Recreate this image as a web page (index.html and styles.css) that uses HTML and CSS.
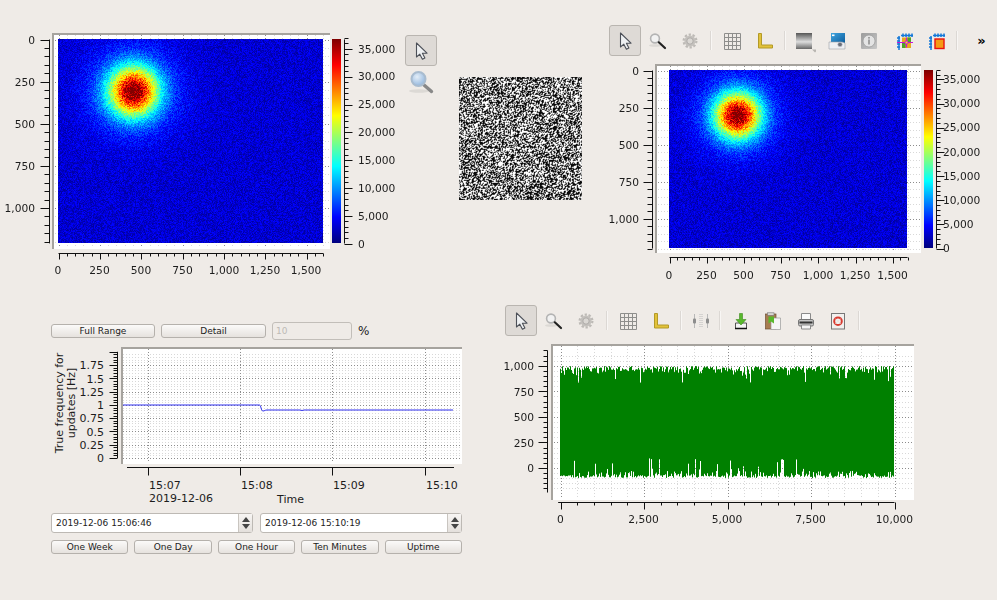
FILE: index.html
```html
<!DOCTYPE html>
<html lang="en">
<head>
<meta charset="utf-8">
<title>Plots</title>
<link rel="stylesheet" href="styles.css">
</head>
<body>
<svg class="defs" aria-hidden="true">
  <defs>
    <linearGradient id="g-metal" x1="0" y1="0" x2="0" y2="1"><stop offset="0" stop-color="#555"/><stop offset=".55" stop-color="#ddd"/><stop offset="1" stop-color="#666"/></linearGradient>
    <linearGradient id="g-info" x1="0" y1="0" x2="1" y2="1"><stop offset="0" stop-color="#9c9c9c"/><stop offset="1" stop-color="#c8c8c8"/></linearGradient>
    <linearGradient id="g-blue" x1="0" y1="0" x2="1" y2="1"><stop offset="0" stop-color="#3fa5e0"/><stop offset="1" stop-color="#0b5a9a"/></linearGradient>
    <radialGradient id="g-lens" cx=".4" cy=".35" r=".7"><stop offset="0" stop-color="#e4eef8"/><stop offset="1" stop-color="#8fb4dc"/></radialGradient>
    <symbol id="i-arrow" viewBox="0 0 24 24"><path d="M7.5 4V18L10.8 15.2 13.4 20.3 15.9 19 13.4 14.2H18Z" fill="#eef0f2" stroke="#4c5058" stroke-width="1.1" stroke-linejoin="round"/></symbol>
    <symbol id="i-zoom" viewBox="0 0 24 24"><ellipse cx="9" cy="16.5" rx="6" ry="1.3" fill="#dcd9d5"/><circle cx="9" cy="9.5" r="4.4" fill="#f2f2f2" stroke="#b4b4b4" stroke-width="1.6"/><path d="M12.800 13.300 19 19" stroke="#222" stroke-width="2.2" stroke-linecap="round"/></symbol>
    <symbol id="i-gear" viewBox="0 0 24 24"><circle cx="12" cy="12" r="5.6" fill="#c4c1bd"/><circle cx="12" cy="12" r="6.4" fill="none" stroke="#bdbab6" stroke-width="2.2" stroke-dasharray="2.3 1.7"/><circle cx="12" cy="12" r="3.2" fill="#dad7d3" stroke="#aeaba8"/></symbol>
    <symbol id="i-grid" viewBox="0 0 24 24"><path d="M4.5 4.5H20.5V20.5H4.5ZM8.5 4.5V20.5M12.5 4.5V20.5M16.5 4.5V20.5M4.5 8.5H20.5M4.5 12.5H20.5M4.5 16.5H20.5" fill="none" stroke="#8e8e8c"/></symbol>
    <symbol id="i-ruler" viewBox="0 0 24 24"><path d="M6.5 4.500H9.500V16H20.500V19H6.500Z" fill="#e2c23a" stroke="#b39a28"/></symbol>
    <symbol id="i-scale" viewBox="0 0 24 24"><rect x="4" y="4" width="16" height="16" fill="url(#g-metal)"/><path d="M20 20.5H26L23 23.5Z" fill="#b8b5b1"/></symbol>
    <symbol id="i-camera" viewBox="0 0 24 24"><rect x="6" y="4" width="14" height="11" fill="url(#g-blue)"/><path d="M4 13H17L20 14V20H4Z" fill="#eef0f2" stroke="#9aa0a6" stroke-width=".6"/><circle cx="15" cy="15.5" r="2.300" fill="#6a7078" stroke="#ccd" stroke-width=".6"/><rect x="7" y="5.500" width="2.500" height="1.600" fill="#fff"/></symbol>
    <symbol id="i-info" viewBox="0 0 24 24"><rect x="4" y="4" width="16" height="16" rx="1" fill="url(#g-info)"/><circle cx="12" cy="12" r="6" fill="#e4e4e4" stroke="#8f8f8f" stroke-width=".6"/><rect x="11" y="10.5" width="2" height="5" fill="#a0a0a0"/><rect x="11" y="8" width="2" height="1.6" fill="#a0a0a0"/></symbol>
    <symbol id="i-pick" viewBox="0 0 24 24"><path d="M9 8.500H18V19H9Z" fill="#e8a81c"/><path d="M9 14H12.500V19H9ZM14.500 8.500H18V13H14.500Z" fill="#4ca02c"/><path d="M6 7V21M4 9H7M4 12H7M4 15H7M4 18H7M8 6.500H20M10 4.500V8M13 4.500V8M16 4.500V8M19 4.500V8" stroke="#1478d8" stroke-width="1.500" fill="none"/><path d="M4 13.500H20M13.500 8.500V18.500" stroke="#c814d8" stroke-width="1.200"/><circle cx="13.500" cy="13.500" r="1.500" fill="#f0e020" stroke="#c814d8"/></symbol>
    <symbol id="i-rect" viewBox="0 0 24 24"><rect x="10" y="10" width="9" height="9.500" fill="#f59a14" stroke="#e81010" stroke-width="1.400"/><path d="M6 7V21M4 9H7M4 12H7M4 15H7M4 18H7M8 6.500H20M10 4.500V8M13 4.500V8M16 4.500V8M19 4.500V8" stroke="#1478d8" stroke-width="1.500" fill="none"/></symbol>
    <symbol id="i-cursors" viewBox="0 0 24 24"><path d="M5.500 5V19M18.500 5V19" stroke="#b8b8b8"/><rect x="4" y="9.500" width="3" height="5" rx="1" fill="#8d8d8d"/><rect x="17" y="9.500" width="3" height="5" rx="1" fill="#8d8d8d"/><path d="M11 5V19M13 5V19" stroke="#bbb" stroke-dasharray="1 1"/></symbol>
    <symbol id="i-save" viewBox="0 0 24 24"><path d="M6.500 14V19.500H17.500V14Z" fill="#f4f4f4" stroke="#555"/><path d="M6 19.500H18" stroke="#111" stroke-width="1.500"/><path d="M10.500 4.500H13.500V10.500H17L12 16 7 10.500H10.500Z" fill="#58b82c" stroke="#3c8c1c" stroke-width=".6"/></symbol>
    <symbol id="i-paste" viewBox="0 0 24 24"><rect x="4.500" y="5" width="10.500" height="15" fill="#a87c50" stroke="#6e5034" stroke-width=".7"/><rect x="6.500" y="3.800" width="6.500" height="2.500" fill="#d8d6d2" stroke="#777" stroke-width=".6"/><path d="M10 9H19.500V20.500H10Z" fill="#f5f5f5" stroke="#999" stroke-width=".7"/><path d="M7.500 7.500H13V14.500L10 12.500 7.500 14.500Z" fill="#58b82c"/></symbol>
    <symbol id="i-print" viewBox="0 0 24 24"><path d="M7.500 4.500H16.500V11H7.500Z" fill="#fafafa" stroke="#8a8a8a"/><rect x="4.500" y="10.500" width="15" height="6.500" rx="1.500" fill="#c4c4c4" stroke="#777"/><rect x="5.500" y="12.500" width="13" height="2" fill="#333"/><path d="M7.500 16H16.500V20H7.500Z" fill="#f5f5f5" stroke="#8a8a8a"/></symbol>
    <symbol id="i-help" viewBox="0 0 24 24"><rect x="5.500" y="4.500" width="13" height="15.500" fill="#f2f0ee" stroke="#777"/><circle cx="12" cy="12.200" r="3.800" fill="none" stroke="#d83a30" stroke-width="2"/><path d="M9.500 9.700 14.500 14.700M14.500 9.700 9.500 14.700" stroke="#e8e4e0" stroke-width="1"/></symbol>
  </defs>
</svg>

<main class="page">
  <section class="top-row">
    <svg id="plot-a" class="plot-a" viewBox="0 25 400 260" xmlns="http://www.w3.org/2000/svg">
      <rect x="52" y="33" width="278" height="216" fill="#fff"/>
      <path d="M53 249V34H330" class="frame"/>
      <g class="gridlines"></g>
      <foreignObject x="58" y="39" width="265" height="204"><canvas id="heat-a" width="265" height="204"></canvas></foreignObject>
      <foreignObject x="332" y="39" width="9" height="204"><canvas class="colorbar" width="9" height="204"></canvas></foreignObject>
      <g class="axes"></g>
      <g class="lab end">
        <text x="35" y="43.500">0</text><text x="35" y="85.500">250</text><text x="35" y="128">500</text><text x="35" y="170">750</text><text x="35" y="212">1,000</text>
      </g>
      <g class="lab mid">
        <text x="58" y="274">0</text><text x="99.500" y="274">250</text><text x="141" y="274">500</text><text x="182.500" y="274">750</text><text x="224" y="274">1,000</text><text x="265" y="274">1,250</text><text x="306" y="274">1,500</text>
      </g>
      <g class="lab">
        <text x="358" y="53">35,000</text><text x="358" y="80">30,000</text><text x="358" y="108">25,000</text><text x="358" y="136">20,000</text><text x="358" y="164">15,000</text><text x="358" y="192">10,000</text><text x="358" y="220">5,000</text><text x="358" y="248">0</text>
      </g>
    </svg>

    <div class="mid-tools">
      <span class="tool tool-active"><svg class="ico"><use href="#i-arrow"/></svg></span>
      <svg class="big-lens" viewBox="0 0 28 28"><ellipse cx="12" cy="23" rx="10" ry="1.800" fill="#dcd9d5"/><path d="M17 17 24.500 23.500" stroke="#888" stroke-width="3.400" stroke-linecap="round"/><circle cx="11.500" cy="11" r="7" fill="url(#g-lens)" stroke="#a9bccf" stroke-width="2"/></svg>
    </div>

    <canvas id="noise" class="noise" width="123" height="123"></canvas>

    <div class="right-panel">
      <div class="toolbar">
        <span class="tool tool-active"><svg class="ico"><use href="#i-arrow"/></svg></span>
        <span class="tool"><svg class="ico"><use href="#i-zoom"/></svg></span>
        <span class="tool"><svg class="ico"><use href="#i-gear"/></svg></span>
        <span class="sep"></span>
        <span class="tool"><svg class="ico"><use href="#i-grid"/></svg></span>
        <span class="tool"><svg class="ico"><use href="#i-ruler"/></svg></span>
        <span class="sep sep-narrow"></span>
        <span class="tool"><svg class="ico"><use href="#i-scale"/></svg></span>
        <span class="tool"><svg class="ico"><use href="#i-camera"/></svg></span>
        <span class="tool"><svg class="ico"><use href="#i-info"/></svg></span>
        <span class="tool tool-gap"><svg class="ico"><use href="#i-pick"/></svg></span>
        <span class="tool"><svg class="ico"><use href="#i-rect"/></svg></span>
        <span class="sep"></span>
        <span class="more">»</span>
      </div>
      <svg id="plot-b" class="plot-b" viewBox="600 60 397 230" xmlns="http://www.w3.org/2000/svg">
        <rect x="655" y="64" width="266" height="189" fill="#fff"/>
        <path d="M656 253V65H921" class="frame"/>
        <g class="gridlines"></g>
        <foreignObject x="669" y="70" width="238" height="178"><canvas id="heat-b" width="238" height="178"></canvas></foreignObject>
        <foreignObject x="924" y="70" width="9" height="178"><canvas class="colorbar" width="9" height="178"></canvas></foreignObject>
        <g class="axes"></g>
        <g class="lab end">
          <text x="639" y="75">0</text><text x="639" y="112">250</text><text x="639" y="149">500</text><text x="639" y="186">750</text><text x="639" y="223">1,000</text>
        </g>
        <g class="lab mid">
          <text x="669" y="279">0</text><text x="706.500" y="279">250</text><text x="743.500" y="279">500</text><text x="780.500" y="279">750</text><text x="818" y="279">1,000</text><text x="855" y="279">1,250</text><text x="892.500" y="279">1,500</text>
        </g>
        <g class="lab">
          <text x="943" y="83">35,000</text><text x="943" y="107">30,000</text><text x="943" y="131">25,000</text><text x="943" y="156">20,000</text><text x="943" y="180">15,000</text><text x="943" y="204">10,000</text><text x="943" y="228">5,000</text><text x="943" y="252">0</text>
        </g>
      </svg>
    </div>
  </section>

  <section class="bottom-row">
    <div class="left-panel">
      <div class="range-row">
        <button class="btn btn-full">Full Range</button>
        <button class="btn btn-detail">Detail</button>
        <div class="pct-box">10</div>
        <span class="pct">%</span>
      </div>
      <svg id="plot-c" class="plot-c" viewBox="40 342 430 170" xmlns="http://www.w3.org/2000/svg">
        <rect x="121" y="347" width="341" height="117" fill="#fff"/>
        <path d="M122 464V348H462" class="frame"/>
        <g class="gridlines"></g>
        <path d="M123 405H259.500C261 405 261 411 263 411C264.500 411 265 410 267 410H300L302 410.500 304 410H453" fill="none" stroke="#2f2fee" stroke-width="1"/>
        <g class="axes"></g>
        <g class="lab lab-l end">
          <text x="104" y="369">1.75</text><text x="104" y="383">1.5</text><text x="104" y="396">1.25</text><text x="104" y="409">1</text><text x="104" y="422">0.75</text><text x="104" y="436">0.5</text><text x="104" y="449">0.25</text><text x="104" y="462">0</text>
        </g>
        <g class="lab lab-l mid">
          <text x="62.500" y="403" transform="rotate(-90 62.500 403)">True frequency for</text>
          <text x="75" y="403" transform="rotate(-90 75 403)">updates [Hz]</text>
        </g>
        <g class="lab lab-l">
          <text x="149" y="489">15:07</text><text x="241" y="489">15:08</text><text x="333" y="489">15:09</text><text x="426" y="489">15:10</text>
          <text x="149" y="502">2019-12-06</text><text x="277" y="503">Time</text>
        </g>
      </svg>
      <div class="date-row">
        <div class="date"><span class="date-text">2019-12-06 15:06:46</span><span class="spin"><i class="up"></i><i class="down"></i></span></div>
        <div class="date"><span class="date-text">2019-12-06 15:10:19</span><span class="spin"><i class="up"></i><i class="down"></i></span></div>
      </div>
      <div class="preset-row">
        <button class="btn">One Week</button>
        <button class="btn">One Day</button>
        <button class="btn">One Hour</button>
        <button class="btn">Ten Minutes</button>
        <button class="btn">Uptime</button>
      </div>
    </div>

    <div class="wave-panel">
      <div class="toolbar">
        <span class="tool tool-active"><svg class="ico"><use href="#i-arrow"/></svg></span>
        <span class="tool"><svg class="ico"><use href="#i-zoom"/></svg></span>
        <span class="tool"><svg class="ico"><use href="#i-gear"/></svg></span>
        <span class="sep"></span>
        <span class="tool"><svg class="ico"><use href="#i-grid"/></svg></span>
        <span class="tool"><svg class="ico"><use href="#i-ruler"/></svg></span>
        <span class="sep"></span>
        <span class="tool tool-narrow"><svg class="ico"><use href="#i-cursors"/></svg></span>
        <span class="sep"></span>
        <span class="tool"><svg class="ico"><use href="#i-save"/></svg></span>
        <span class="tool"><svg class="ico"><use href="#i-paste"/></svg></span>
        <span class="tool"><svg class="ico"><use href="#i-print"/></svg></span>
        <span class="tool"><svg class="ico"><use href="#i-help"/></svg></span>
        <span class="sep"></span>
      </div>
      <svg id="plot-d" class="plot-d" viewBox="495 340 430 190" xmlns="http://www.w3.org/2000/svg">
        <rect x="551" y="344" width="363" height="156" fill="#fff"/>
        <path d="M552 500V345H914" class="frame"/>
        <g class="gridlines"></g>
        <foreignObject x="560" y="360" width="335" height="125"><canvas id="wave" width="335" height="125"></canvas></foreignObject>
        <g class="axes"></g>
        <g class="lab end">
          <text x="534" y="370">1,000</text><text x="534" y="396">750</text><text x="534" y="421">500</text><text x="534" y="447">250</text><text x="534" y="472">0</text>
        </g>
        <g class="lab mid">
          <text x="560.500" y="523">0</text><text x="643.500" y="523">2,500</text><text x="727" y="523">5,000</text><text x="810.500" y="523">7,500</text><text x="894.500" y="523">10,000</text>
        </g>
      </svg>
    </div>
  </section>
</main>
<script src="plots.js"></script>
</body>
</html>
```

FILE: styles.css
```css
* { box-sizing: border-box; }
html, body { margin: 0; padding: 0; }
body {
  width: 997px;
  height: 600px;
  overflow: hidden;
  background: #efebe7;
  color: #1c1c1c;
  font-family: "DejaVu Sans", sans-serif;
}
.defs { position: absolute; width: 0; height: 0; }
.page { display: flex; flex-direction: column; }

.top-row { display: flex; height: 305px; padding-top: 25px; }
.bottom-row { display: flex; height: 295px; }

svg { display: block; }
canvas { display: block; }
.plot-a { width: 400px; height: 260px; flex: none; }
.plot-b { width: 397px; height: 230px; margin-top: 4px; }
.plot-c { width: 430px; height: 170px; margin: 2px 0 0 -11px; }
.plot-d { width: 430px; height: 190px; margin-top: 4px; }

.frame { fill: none; stroke: #a6a39e; stroke-width: 2; }
.lab { font-size: 10.67px; fill: #1c1c1c; }
.lab-l { font-size: 11px; }
.end { text-anchor: end; }
.mid { text-anchor: middle; }

.mid-tools {
  flex: none;
  width: 32px;
  margin: 10px 0 0 5px;
  display: flex;
  flex-direction: column;
  align-items: center;
}
.big-lens { width: 28px; height: 28px; margin-top: 2px; }
.noise { flex: none; width: 123px; height: 123px; margin: 52px 0 0 22px; }

.right-panel { flex: none; width: 397px; margin-left: 18px; }
.right-panel .toolbar { padding-left: 9px; }
.wave-panel { flex: none; width: 430px; margin-left: 25px; }
.wave-panel .toolbar { padding-left: 10px; }

.toolbar { display: flex; align-items: center; height: 31px; }
.tool {
  flex: none;
  width: 32.5px;
  height: 31px;
  display: flex;
  align-items: center;
  justify-content: center;
}
.tool-narrow { width: 30px; }
.tool-gap { margin-left: 3px; }
.tool-active {
  width: 32px;
  margin-right: .5px;
  background: #dedad6;
  border: 1px solid #b9b5b0;
  border-radius: 3px;
}
.ico { width: 24px; height: 24px; overflow: visible; flex: none; }
.sep {
  flex: none;
  width: 9px;
  height: 19px;
  background: linear-gradient(to right, transparent 3px, #dcd8d4 3px, #dcd8d4 4px, #f8f6f4 4px, #f8f6f4 5px, transparent 5px);
}
.sep-narrow { width: 7.25px; }
.more {
  margin-left: 15px;
  font-size: 13px;
  font-weight: 700;
  color: #000;
  line-height: 1;
}

.left-panel { flex: none; width: 430px; margin: 17px 0 0 40px; padding-left: 11px; padding-right: 8px; }
.range-row { display: flex; align-items: center; gap: 6px; height: 18px; }
.btn {
  display: flex;
  align-items: center;
  justify-content: center;
  height: 14px;
  padding: 0;
  border: 1px solid #b5b1ac;
  border-radius: 3px;
  background: linear-gradient(#fbfaf9, #e6e2de);
  color: #1c1c1c;
  font: 9px "DejaVu Sans", sans-serif;
  white-space: nowrap;
}
.btn-full { width: 104px; }
.btn-detail { width: 105px; }
.pct-box {
  width: 80px;
  height: 18px;
  padding-left: 3px;
  border: 1px solid #c2beb9;
  border-radius: 3px;
  color: #bdbab6;
  font-size: 9px;
  line-height: 16px;
}
.pct { font-size: 12px; }

.date-row { display: flex; gap: 7px; margin-top: 1px; }
.date {
  flex: 1;
  display: flex;
  height: 20px;
  background: #fff;
  border: 1px solid #bdb9b4;
  border-radius: 3px;
  font-size: 9px;
}
.date-text { flex: 1; padding-left: 4px; line-height: 18px; }
.spin {
  width: 14px;
  display: flex;
  flex-direction: column;
  align-items: center;
  justify-content: center;
  gap: 2px;
  background: linear-gradient(#f7f5f3, #e4e0dc);
  border-left: 1px solid #c9c5c0;
}
.up { width: 0; height: 0; border: 4px solid transparent; border-top: 0; border-bottom: 5px solid #444; }
.down { width: 0; height: 0; border: 4px solid transparent; border-bottom: 0; border-top: 5px solid #444; }

.preset-row { display: flex; gap: 6px; margin-top: 7px; }
.preset-row .btn { flex: 1; }
```

FILE: plots.js
```js
(function () {
  var seed = 12345;
  function rnd() {
    seed = (seed * 1664525 + 1013904223) >>> 0;
    var t = seed ^ (seed >>> 15);
    t = Math.imul(t, 0x2c1b3c6d) >>> 0;
    return ((t ^ (t >>> 13)) >>> 0) / 4294967296;
  }
  function clamp(x) { return Math.max(0, Math.min(1, x)); }
  function jet(t) {
    return [
      255 * clamp(1.5 - Math.abs(4 * t - 3)),
      255 * clamp(1.5 - Math.abs(4 * t - 2)),
      255 * clamp(1.5 - Math.abs(4 * t - 1))
    ];
  }
  var MAX = 36700;

  function heat(id, cx, cy, s1, s2) {
    var c = document.getElementById(id), w = c.width, h = c.height;
    var g = c.getContext('2d'), img = g.createImageData(w, h), d = img.data;
    for (var y = 0; y < h; y++) {
      for (var x = 0; x < w; x++) {
        var r2 = (x - cx) * (x - cx) + (y - cy) * (y - cy);
        var gv = 26000 * Math.exp(-r2 / (2 * s1 * s1)) + 8500 * Math.exp(-r2 / (2 * s2 * s2));
        var v = 1000 + rnd() * 3900 + gv * (0.88 + rnd() * 0.24);
        var col = jet(Math.min(1, v / MAX)), i = (y * w + x) * 4;
        d[i] = col[0]; d[i + 1] = col[1]; d[i + 2] = col[2]; d[i + 3] = 255;
      }
    }
    g.putImageData(img, 0, 0);
  }
  heat('heat-a', 75, 52, 16.5, 28);
  heat('heat-b', 68, 45, 15, 25);

  document.querySelectorAll('.colorbar').forEach(function (c) {
    var g = c.getContext('2d');
    for (var y = 0; y < c.height; y++) {
      var col = jet(1 - y / (c.height - 1));
      g.fillStyle = 'rgb(' + col.map(Math.round).join(',') + ')';
      g.fillRect(0, y, c.width, 1);
    }
  });

  (function () {
    var c = document.getElementById('noise'), g = c.getContext('2d');
    var w = c.width, h = c.height, bits = [];
    for (var n = 0; n < (w + 1) * (h + 1); n++) bits.push(rnd() < 0.5 ? 10 : 255);
    var img = g.createImageData(w, h), d = img.data;
    for (var y = 0; y < h; y++) {
      for (var x = 0; x < w; x++) {
        var at = y * (w + 1) + x;
        var v = bits[at] * 0.6 + bits[at + 1] * 0.2 + bits[at + w + 1] * 0.2;
        var i = (y * w + x) * 4;
        d[i] = d[i + 1] = d[i + 2] = v; d[i + 3] = 255;
      }
    }
    g.putImageData(img, 0, 0);
  })();

  (function () {
    var c = document.getElementById('wave'), g = c.getContext('2d');
    g.fillStyle = '#008000';
    for (var x = 0; x < 334; x++) {
      var a = rnd(), b = rnd();
      var top = 6 + rnd() * 4;
      if (a > 0.88) top = 9 + rnd() * 14; else if (a > 0.6) top = 7 + rnd() * 6;
      var bot = 118 - rnd() * 3;
      if (b > 0.88) bot = 116 - rnd() * 18; else if (b > 0.6) bot = 117 - rnd() * 6;
      g.fillRect(x, top, 1, bot - top);
    }
  })();

  var NS = 'http://www.w3.org/2000/svg';
  function add(group, d, cls) {
    var p = document.createElementNS(NS, 'path');
    p.setAttribute('d', d);
    p.setAttribute('fill', 'none');
    var s = { axis: ['#111', '1', ''], major: ['#8c8c8c', '1', '1 2'], minor: ['#d8d8d8', '1', '1 2'] }[cls];
    p.setAttribute('stroke', s[0]);
    p.setAttribute('stroke-width', s[1]);
    if (s[2]) p.setAttribute('stroke-dasharray', s[2]);
    group.appendChild(p);
  }
  function values(from, to, step) {
    var out = [], n = Math.round((to - from) / step);
    for (var i = 0; i <= n; i++) out.push(from + i * step);
    return out;
  }
  function vAxis(svg, o) {
    var d = 'M' + o.x + ' ' + o.y(o.from) + 'V' + o.y(o.to);
    values(o.minStart, o.to, o.minor).forEach(function (v) {
      var major = Math.abs(v / o.major - Math.round(v / o.major)) < 1e-6;
      d += 'M' + o.x + ' ' + (Math.round(o.y(v)) + 0.5) + 'h' + ((major ? o.mlen : o.slen) * o.dir);
    });
    add(svg.querySelector('.axes'), d, 'axis');
  }
  function hAxis(svg, o) {
    var d = 'M' + o.x(o.from) + ' ' + o.y + 'H' + o.x(o.to);
    values(o.minStart, o.to, o.minor).forEach(function (v) {
      var major = Math.abs(v / o.major - Math.round(v / o.major)) < 1e-6;
      d += 'M' + (Math.round(o.x(v)) + 0.5) + ' ' + o.y + 'v' + (major ? o.mlen : o.slen);
    });
    add(svg.querySelector('.axes'), d, 'axis');
  }
  function grid(svg, box, xv, yv, xs, ys, cls) {
    var d = '';
    xv.forEach(function (v) { d += 'M' + (Math.round(xs(v)) + 0.5) + ' ' + box[1] + 'V' + box[3]; });
    yv.forEach(function (v) { d += 'M' + box[0] + ' ' + (Math.round(ys(v)) + 0.5) + 'H' + box[2]; });
    add(svg.querySelector('.gridlines'), d, cls);
  }
  function skip(list, step) {
    return list.filter(function (v) { return Math.abs(v / step - Math.round(v / step)) > 1e-6; });
  }

  /* plot A */
  var a = document.getElementById('plot-a');
  var ax = function (v) { return 58.5 + v * 0.1655; }, ay = function (v) { return 39.5 + v * 0.1685; };
  grid(a, [55, 35, 329, 248], skip(values(0, 1600, 50), 250), skip(values(0, 1200, 50), 250), ax, ay, 'minor');
  grid(a, [55, 35, 329, 248], values(0, 1500, 250), values(0, 1000, 250), ax, ay, 'major');
  vAxis(a, { x: 49.5, y: ay, from: 0, to: 1210, minStart: 0, minor: 50, major: 250, mlen: 9, slen: 5, dir: -1 });
  hAxis(a, { y: 253.5, x: ax, from: 0, to: 1600, minStart: 0, minor: 50, major: 250, mlen: 6, slen: 3 });
  var acb = function (v) { return 243.5 - v * 0.00556; };
  vAxis(a, { x: 344.5, y: acb, from: 0, to: 36700, minStart: 0, minor: 1000, major: 5000, mlen: 8, slen: 4, dir: 1 });

  /* plot B */
  var b = document.getElementById('plot-b');
  var bx = function (v) { return 669.5 + v * 0.1488; }, by = function (v) { return 70.5 + v * 0.1484; };
  grid(b, [658, 66, 920, 252], skip(values(0, 1600, 50), 250), skip(values(0, 1200, 50), 250), bx, by, 'minor');
  grid(b, [658, 66, 920, 252], values(0, 1500, 250), values(0, 1000, 250), bx, by, 'major');
  vAxis(b, { x: 652.5, y: by, from: 0, to: 1200, minStart: 0, minor: 50, major: 250, mlen: 9, slen: 5, dir: -1 });
  hAxis(b, { y: 257.5, x: bx, from: 0, to: 1600, minStart: 0, minor: 50, major: 250, mlen: 6, slen: 3 });
  var bcb = function (v) { return 248.5 - v * 0.00483; };
  vAxis(b, { x: 936.5, y: bcb, from: 0, to: 36700, minStart: 0, minor: 1000, major: 5000, mlen: 8, slen: 4, dir: 1 });

  /* plot C */
  var c = document.getElementById('plot-c');
  var cy = function (v) { return 458 - v * 53.1; };
  var ticksX = [148, 240, 332, 425];
  var same = function (v) { return v; };
  grid(c, [123, 349, 461, 463], [], skip(values(0, 2, 0.05), 0.25), same, cy, 'minor');
  grid(c, [123, 349, 461, 463], ticksX, values(0, 1.75, 0.25), same, cy, 'major');
  vAxis(c, { x: 117.5, y: cy, from: 0, to: 2, minStart: 0, minor: 0.05, major: 0.25, mlen: 8, slen: 4, dir: -1 });
  var bottom = 'M127 467.5H454';
  ticksX.forEach(function (x) { bottom += 'M' + (x + 0.5) + ' 467.5v8'; });
  add(c.querySelector('.axes'), bottom, 'axis');

  /* plot D */
  var w = document.getElementById('plot-d');
  var dx = function (v) { return 560.5 + v * 0.0334; }, dy = function (v) { return 468 - v * 0.1022; };
  grid(w, [554, 346, 912, 498], skip(values(0, 10000, 500), 2500), skip(values(-200, 1100, 50), 250), dx, dy, 'minor');
  grid(w, [554, 346, 912, 498], values(0, 10000, 2500), values(0, 1000, 250), dx, dy, 'major');
  vAxis(w, { x: 547.5, y: dy, from: -240, to: 1150, minStart: -200, minor: 50, major: 250, mlen: 9, slen: 4, dir: -1 });
  hAxis(w, { y: 502.5, x: dx, from: -70, to: 10000, minStart: 0, minor: 500, major: 2500, mlen: 7, slen: 3 });
})();
```
